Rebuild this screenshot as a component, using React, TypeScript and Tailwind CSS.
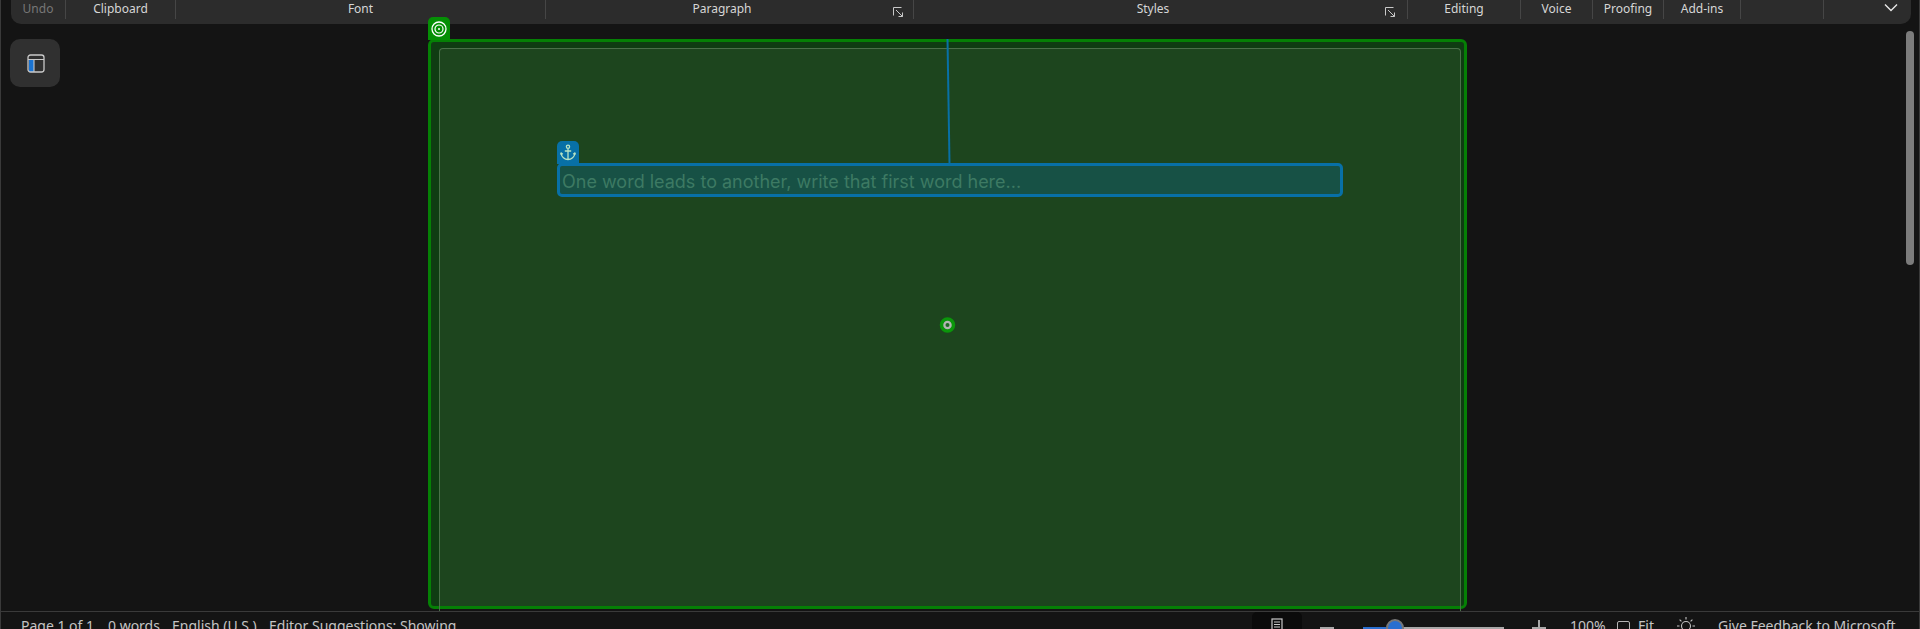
const groups = [
  { label: 'Undo', width: 55, dim: true },
  { label: 'Clipboard', width: 110 },
  { label: 'Font', width: 370 },
  { label: 'Paragraph', width: 368, launcher: 'right-[9px]' },
  { label: 'Styles', width: 494, launcher: 'right-[11px]' },
  { label: 'Editing', width: 113 },
  { label: 'Voice', width: 72 },
  { label: 'Proofing', width: 71 },
  { label: 'Add-ins', width: 77 },
  { label: '', width: 83 },
]

function Launcher({ className }: { className: string }) {
  return (
    <svg width="12" height="12" viewBox="0 0 12 12" fill="none" stroke="#c8c8c8" strokeWidth="1" className={`absolute top-[6px] ${className}`}>
      <path d="M9.5 1.5H1.5V9.5" />
      <path d="M4 4L10.5 10.5M10.5 6.5V10.5H6.5" />
    </svg>
  )
}

function Ribbon() {
  return (
    <div className="ml-[10px] flex h-[24px] w-[1900px] shrink-0 rounded-b-[10px] bg-[#2c2c2c] text-[12px] text-[#d6d6d6]">
      {groups.map(g => (
        <div
          key={g.label || 'empty'}
          style={{ width: g.width }}
          className={`relative h-[19px] shrink-0 border-r border-[#464646] text-center leading-[17px] ${g.launcher ? 'pr-[15px]' : ''}`}
        >
          <span className={g.dim ? 'text-[#777777]' : ''}>{g.label}</span>
          {g.launcher && <Launcher className={g.launcher} />}
        </div>
      ))}
      <svg width="16" height="9" viewBox="0 0 16 9" fill="none" stroke="#e8e8e8" strokeWidth="1.4" className="ml-[59px] mt-[3px]">
        <path d="M2 1.5L8 7.5L14 1.5" />
      </svg>
    </div>
  )
}

function PaneIcon() {
  return (
    <svg width="18" height="19" viewBox="0 0 18 19" fill="none">
      <rect x="2" y="6" width="5" height="12" fill="#1a73d1" />
      <rect x="1" y="1" width="16" height="17" rx="2.5" stroke="#c9c9c9" strokeWidth="1.3" />
      <path d="M1 5.5H17M7 5.5V18" stroke="#c9c9c9" strokeWidth="1.1" />
    </svg>
  )
}

function Target() {
  return (
    <svg width="16" height="16" viewBox="0 0 16 16" fill="none" stroke="#ffffff">
      <circle cx="8" cy="8" r="7" strokeWidth="1.3" />
      <circle cx="8" cy="8" r="4" strokeWidth="1.2" />
      <circle cx="8" cy="8" r="1" fill="#ffffff" stroke="none" />
    </svg>
  )
}

function Anchor() {
  return (
    <svg width="16" height="17" viewBox="0 0 16 17" fill="none" stroke="#b9e4c4" strokeWidth="1.3">
      <circle cx="8" cy="2.7" r="1.6" />
      <path d="M8 4.5V15.5M4.8 7H11.2M1.2 9.5C1.5 13 4.5 15.5 8 15.5C11.5 15.5 14.5 13 14.8 9.5" />
      <path d="M0.5 10.5L1.2 9L2.8 10.3M15.5 10.5L14.8 9L13.2 10.3" />
    </svg>
  )
}

function Canvas() {
  return (
    <div className="relative ml-[368px] mt-[15px] h-[570px] w-[1039px] shrink-0 rounded-[6px] border-[3px] border-[#058005] bg-[#0f3c12]">
      <div className="absolute left-[-3px] top-[-25px] flex h-[23px] w-[22px] items-center justify-center rounded-t-[5px] bg-[#058f05]">
        <Target />
      </div>
      <div className="relative ml-[8px] mt-[6px] h-[558px] w-[1022px] rounded-t-[4px] border border-b-0 border-[#4a7049] bg-[#1d451e] pl-[117px] pt-[114px]">
        <div className="relative h-[34px] w-[786px] rounded-[5px] border-[3px] border-[#0870a6] bg-[#175145] pl-[2px] font-['Inter',sans-serif] text-[18px] leading-[32px] text-[#3d7a63]">
          <div className="absolute left-[-3px] top-[-25px] flex h-[23px] w-[22px] items-center justify-center rounded-t-[5px] bg-[#0870a6]">
            <Anchor />
          </div>
          One word leads to another, write that first word here...
        </div>
        {/* the inner frame's side lines run on past the outer border */}
        <div className="absolute bottom-[-5px] left-[-1px] h-[5px] w-px bg-[#4a7049]" />
        <div className="absolute bottom-[-5px] right-[-1px] h-[5px] w-px bg-[#4a7049]" />
      </div>
      {/* leader line from the anchor box up to the frame, and the centre handle */}
      <svg width="20" height="300" viewBox="0 0 20 300" fill="none" className="absolute left-[505.5px] top-[-3px]">
        <path d="M10.5 0L12.5 124" stroke="#0870a6" strokeWidth="2" />
        <circle cx="10.5" cy="286" r="6" fill="#b4b4b4" stroke="#0b960b" strokeWidth="3.5" />
        <circle cx="10.5" cy="286" r="2" fill="#1f6a24" />
      </svg>
    </div>
  )
}

function StatusBar() {
  return (
    <div className="relative flex h-[18px] shrink-0 border-t border-[#3a3a3a] text-[14px] leading-[18px] text-[#c4c4c4]">
      <span className="ml-[20px] mt-[5px] w-[87px] whitespace-nowrap">Page 1 of 1</span>
      <span className="mt-[5px] w-[64px] whitespace-nowrap">0 words</span>
      <span className="mt-[5px] w-[97px] whitespace-nowrap">English (U.S.)</span>
      <span className="mt-[5px] w-[190px] whitespace-nowrap">Editor Suggestions: Showing</span>

      <div className="ml-[793px] flex h-[30px] w-[50px] justify-center rounded-[5px] bg-[#0b0b0b] pt-[6px]">
        <svg width="12" height="14" viewBox="0 0 12 14" fill="none" stroke="#c9c9c9" strokeWidth="1.2">
          <rect x="1" y="1" width="10" height="13" />
          <path d="M3 4H9M3 6.5H9M3 9H9" />
        </svg>
      </div>
      <div className="ml-[18px] mt-[15px] h-[2px] w-[14px] bg-[#a8a8a8]" />
      <div className="relative ml-[29px] mt-[14.5px] h-[2px] w-[141px] bg-[#a8a8a8]">
        <div className="h-full w-[32px] bg-[#2a6fd0]" />
        <div className="absolute left-[23px] top-[-8px] h-[18px] w-[18px] rounded-full border-[2px] border-[#777777] bg-[#2a6fd0]" />
      </div>
      <div className="relative ml-[28px] mt-[8px] h-[14px] w-[14px]">
        <div className="absolute left-0 top-[7px] h-[1.5px] w-[14px] bg-[#a8a8a8]" />
        <div className="absolute left-[6px] top-0 h-[14px] w-[1.5px] bg-[#a8a8a8]" />
      </div>
      <span className="ml-[24px] mt-[5px] w-[47px]">100%</span>
      <div className="mt-[9px] h-[14px] w-[13px] rounded-[2px] border border-[#b5b5b5]" />
      <span className="ml-[8px] mt-[5px] w-[38px]">Fit</span>
      <svg width="20" height="20" viewBox="0 0 20 20" fill="none" stroke="#c4c4c4" strokeWidth="1.1" className="mt-[4px]">
        <circle cx="10" cy="10" r="4.5" />
        <path d="M10 1V3.5M3.6 3.6L5.4 5.4M16.4 3.6L14.6 5.4M1 10H3.5M16.5 10H19" />
      </svg>
      <span className="ml-[22px] mt-[5px] whitespace-nowrap">Give Feedback to Microsoft</span>
    </div>
  )
}

export default function App() {
  return (
    <div className="relative flex h-[629px] w-[1920px] flex-col overflow-hidden border-x border-[#3a3a3a] bg-[#141414] font-['Noto_Sans',sans-serif]">
      <Ribbon />
      <div className="relative flex min-h-0 flex-1">
        <div className="ml-[9px] mt-[15px] flex h-[48px] w-[50px] shrink-0 items-center justify-center rounded-[10px] bg-[#303030] pl-[1px]">
          <PaneIcon />
        </div>
        <Canvas />
        <div className="absolute right-[5px] top-[7px] h-[234px] w-[8px] rounded-full bg-[#7c7c7c]" />
      </div>
      <StatusBar />
    </div>
  )
}
